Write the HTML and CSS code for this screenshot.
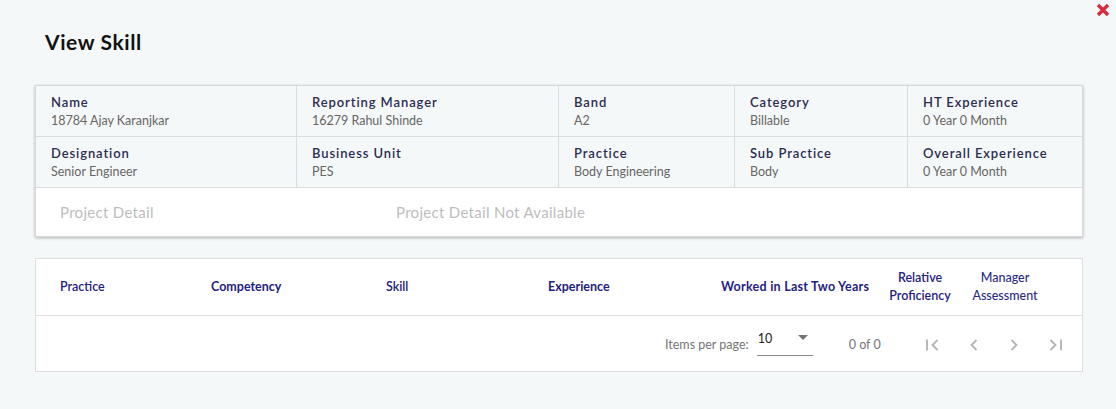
FILE: index.html
```html
<!DOCTYPE html>
<html>
<head>
<meta charset="utf-8">
<link rel="stylesheet" href="styles.css">
</head>
<body>
<div class="dialog">
  <button class="close" aria-label="Close">
    <svg width="14" height="14" viewBox="0 0 14 14"><path d="M2 2 L12 12 M12 2 L2 12" stroke="#d92b3e" stroke-width="3.4" stroke-linecap="butt"/></svg>
  </button>
  <h1 class="title">View Skill</h1>

  <div class="info-card">
    <div class="info-grid">
      <div class="cell"><div class="lbl">Name</div><div class="val">18784 Ajay Karanjkar</div></div>
      <div class="cell"><div class="lbl">Reporting Manager</div><div class="val">16279 Rahul Shinde</div></div>
      <div class="cell"><div class="lbl">Band</div><div class="val">A2</div></div>
      <div class="cell"><div class="lbl">Category</div><div class="val">Billable</div></div>
      <div class="cell last"><div class="lbl">HT Experience</div><div class="val">0 Year 0 Month</div></div>
      <div class="cell"><div class="lbl">Designation</div><div class="val">Senior Engineer</div></div>
      <div class="cell"><div class="lbl">Business Unit</div><div class="val">PES</div></div>
      <div class="cell"><div class="lbl">Practice</div><div class="val">Body Engineering</div></div>
      <div class="cell"><div class="lbl">Sub Practice</div><div class="val">Body</div></div>
      <div class="cell last"><div class="lbl">Overall Experience</div><div class="val">0 Year 0 Month</div></div>
    </div>
    <div class="project-row">
      <span class="proj-lbl">Project Detail</span>
      <span class="proj-val">Project Detail Not Available</span>
    </div>
  </div>

  <div class="table-card">
    <div class="thead">
      <div class="th c1">Practice</div>
      <div class="th c2 bold">Competency</div>
      <div class="th c3">Skill</div>
      <div class="th c4 bold">Experience</div>
      <div class="th c5 bold wide">Worked in Last Two Years</div>
      <div class="th c6 center">Relative<br>Proficiency</div>
      <div class="th c7 center light">Manager<br>Assessment</div>
    </div>
    <div class="paginator">
      <span class="ipp">Items per page:</span>
      <div class="select">
        <span class="sel-val">10</span>
        <span class="sel-arrow"></span>
      </div>
      <span class="range">0 of 0</span>
      <div class="nav">
        <span class="nbtn"><svg width="20" height="20" viewBox="0 0 20 20"><path d="M3 4.5 V15.5" stroke="#b3b3b3" stroke-width="1.8" fill="none"/><path d="M13.5 5 L8.5 10 L13.5 15" stroke="#b3b3b3" stroke-width="1.8" fill="none"/></svg></span>
        <span class="nbtn"><svg width="20" height="20" viewBox="0 0 20 20"><path d="M12.5 5 L7.5 10 L12.5 15" stroke="#b3b3b3" stroke-width="1.8" fill="none"/></svg></span>
        <span class="nbtn"><svg width="20" height="20" viewBox="0 0 20 20"><path d="M7.5 5 L12.5 10 L7.5 15" stroke="#b3b3b3" stroke-width="1.8" fill="none"/></svg></span>
        <span class="nbtn"><svg width="20" height="20" viewBox="0 0 20 20"><path d="M6.5 5 L11.5 10 L6.5 15" stroke="#b3b3b3" stroke-width="1.8" fill="none"/><path d="M17 4.5 V15.5" stroke="#b3b3b3" stroke-width="1.8" fill="none"/></svg></span>
      </div>
    </div>
  </div>
</div>
</body>
</html>
```
FILE: styles.css
```css
* { box-sizing: border-box; }
html, body {
  margin: 0;
  padding: 0;
  background: #f5f8f8;
  font-family: Lato, "Noto Sans", sans-serif;
}
.dialog {
  position: relative;
  width: 1116px;
  height: 409px;
  padding: 0 33px 0 35px;
}
.close {
  position: absolute;
  top: 3px;
  right: 6px;
  border: none;
  background: none;
  padding: 0;
  margin: 0;
  width: 14px;
  height: 14px;
  line-height: 0;
}
.title {
  margin: 0;
  padding: 29px 0 0 10px;
  height: 85px;
  font-size: 21px;
  font-weight: 700;
  color: #121212;
  letter-spacing: 0.6px;
}
.info-card {
  border: 1px solid #d6dada;
  background: #fff;
  box-shadow: 0 1px 3px rgba(0,0,0,0.28);
  width: 1048px;
}
.info-grid {
  display: grid;
  grid-template-columns: 261px 262px 176px 173px 174px;
  background: #f5f8f8;
}
.cell {
  height: 51px;
  padding: 9px 0 0 15px;
  border-right: 1px solid #d9dddd;
  border-bottom: 1px solid #d9dddd;
}
.cell.last { border-right: none; }
.lbl {
  font-size: 13px;
  font-weight: 600;
  color: #2b2d52;
  letter-spacing: 0.9px;
  line-height: 15px;
}
.val {
  font-size: 12.5px;
  color: #666;
  line-height: 15px;
  margin-top: 3px;
}
.project-row {
  height: 48px;
  display: flex;
  align-items: center;
  padding-left: 24px;
  font-size: 15px;
  letter-spacing: 0.3px;
  color: #bdbdbd;
}
.proj-lbl { width: 336px; }
.table-card {
  margin-top: 21px;
  width: 1048px;
  border: 1px solid #dcdfdf;
  background: #fff;
}
.thead {
  display: grid;
  grid-template-columns: 151px 175px 162px 173px 160px 78px 92px;
  align-items: center;
  height: 57px;
  padding-left: 24px;
  border-bottom: 1px solid #e0e0e0;
}
.th {
  font-size: 12.5px;
  font-weight: 600;
  color: #1f2280;
  line-height: 18px;
}
.th.bold { font-weight: 700; }
.th.wide { letter-spacing: 0.25px; }
.th.center { text-align: center; }
.th.light { font-weight: 500; color: #2a2c7f; }
.paginator {
  height: 55px;
  display: flex;
  align-items: center;
  padding-left: 629px;
  color: #757575;
}
.ipp {
  font-size: 12.5px;
  margin-top: 2px;
}
.select {
  position: relative;
  width: 56px;
  height: 30px;
  margin-left: 8px;
  margin-top: -5px;
  border-bottom: 1px solid #8a8a8a;
}
.sel-val {
  position: absolute;
  left: 1px;
  top: 5px;
  font-size: 12.5px;
  color: #222;
}
.sel-arrow {
  position: absolute;
  right: 5px;
  top: 9px;
  width: 0;
  height: 0;
  border-left: 5px solid transparent;
  border-right: 5px solid transparent;
  border-top: 5px solid #757575;
}
.range {
  font-size: 12.5px;
  margin-left: 36px;
  margin-top: 2px;
}
.nav {
  display: flex;
  margin-left: 33px;
  margin-top: 2px;
}
.nbtn {
  width: 40px;
  height: 40px;
  display: flex;
  align-items: center;
  justify-content: center;
}
```
